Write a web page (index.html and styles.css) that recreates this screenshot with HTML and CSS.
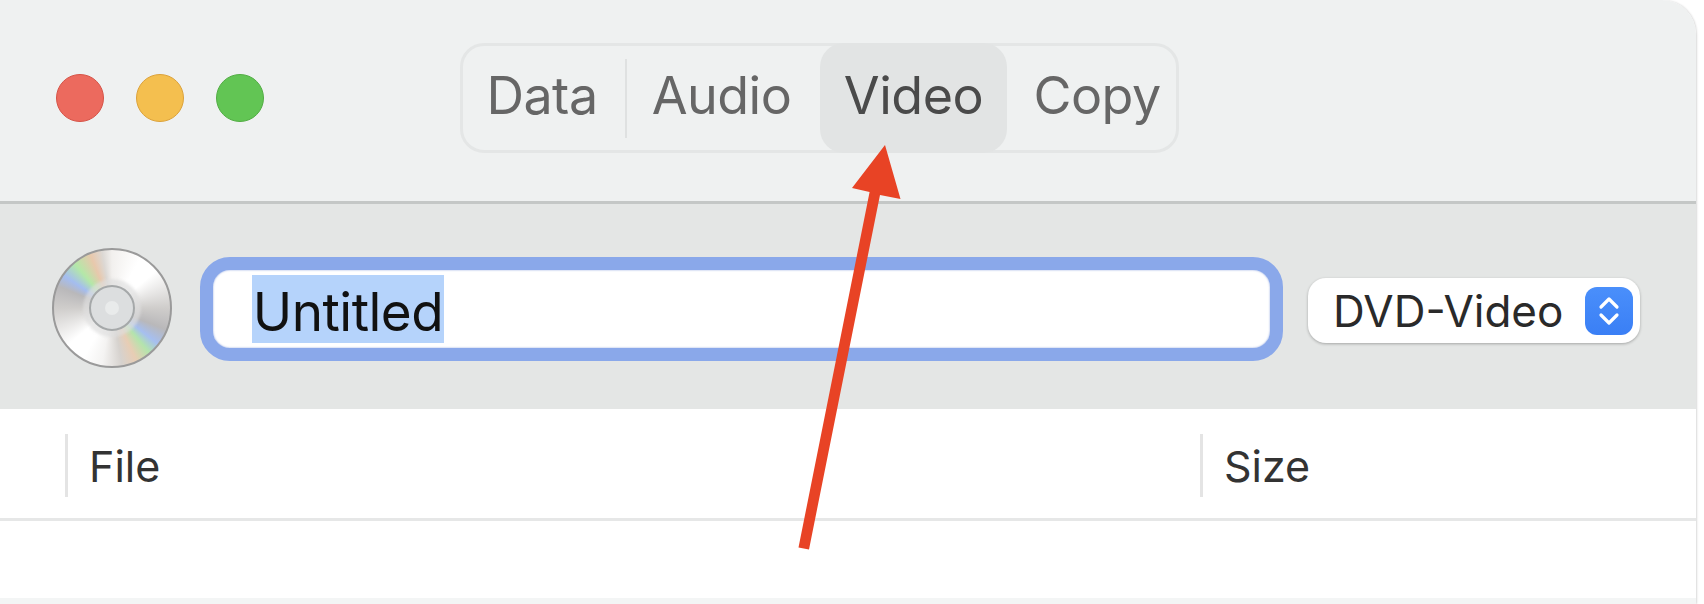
FILE: index.html
```html
<!DOCTYPE html>
<html>
<head>
    <title>Burn</title>
    <link rel="stylesheet" href="styles.css">
</head>
<body>
    <div class="window">
        <div class="titlebar">
            <div class="lights">
                <span class="light red"></span>
                <span class="light yellow"></span>
                <span class="light green"></span>
            </div>
            <div class="tabs">
                <div class="tab tab-data">Data</div>
                <div class="tab-sep"></div>
                <div class="tab tab-audio">Audio</div>
                <div class="tab tab-video active">Video</div>
                <div class="tab tab-copy">Copy</div>
            </div>
        </div>
        <div class="toolbar">
            <div class="disc">
                <div class="hub"><div class="hole"></div></div>
            </div>
            <div class="name-field"><span class="selection">Untitled</span></div>
            <div class="format-select">
                <span class="format-label">DVD-Video</span>
                <span class="stepper">
                    <svg width="30" height="36" viewBox="0 0 30 36" fill="none" stroke="#fff" stroke-width="3.2" stroke-linecap="round" stroke-linejoin="round">
                        <path d="M7 14l8-8 8 8"></path>
                        <path d="M7 22l8 8 8-8"></path>
                    </svg>
                </span>
            </div>
        </div>
        <div class="table-head">
            <div class="col col-file">File</div>
            <div class="col col-size">Size</div>
        </div>
        <div class="table-body"></div>
    </div>
    <svg class="arrow" width="1704" height="604" viewBox="0 0 1704 604">
        <path d="M885 145L900.500 199L880 195L809 549.500L798.500 547.500L869.600 192L852 188Z" fill="#e84325"></path>
    </svg>
</body>
</html>
```

FILE: styles.css
```css
body {
    font-family: Inter, "Liberation Sans", sans-serif;
    margin: 0;
    width: 1704px;
    height: 604px;
    overflow: hidden;
    position: relative;
    background-color: #fff;
}
.window {
    width: 1696px;
    height: 604px;
    display: flex;
    flex-direction: column;
    border-top-right-radius: 34px;
    overflow: hidden;
    box-shadow: 1px 0 2px rgba(0, 0, 0, 0.15);
}
.titlebar {
    height: 201px;
    flex-shrink: 0;
    background-color: #eff1f1;
    border-bottom: 3px solid #c4c7c6;
    display: flex;
    align-items: flex-start;
}
.lights {
    display: flex;
    gap: 32px;
    margin: 74px 0 0 56px;
}
.light {
    width: 48px;
    height: 48px;
    border-radius: 50%;
    box-sizing: border-box;
    border: 1px solid transparent;
}
.red {
    background-color: #ec6a5e;
    border-color: #d65347;
}
.yellow {
    background-color: #f4bf4f;
    border-color: #dca23a;
}
.green {
    background-color: #62c554;
    border-color: #52ad44;
}
.tabs {
    display: flex;
    align-items: center;
    box-sizing: border-box;
    width: 719px;
    height: 110px;
    margin: 43px 0 0 196px;
    border: 3px solid #e4e6e6;
    border-radius: 24px;
}
.tab {
    font-size: 52px;
    height: 104px;
    line-height: 100px;
    color: #666;
    letter-spacing: -0.5px;
    text-align: center;
    box-sizing: border-box;
}
.tab-data {
    width: 162px;
    padding-right: 4px;
}
.tab-sep {
    width: 2px;
    height: 79px;
    background-color: #dfe1e1;
}
.tab-audio {
    width: 193px;
    padding-right: 4px;
}
.tab-video {
    width: 187px;
    height: 110px;
    line-height: 106px;
    margin: -3px 0;
    color: #4a4a4a;
    background-color: #e2e4e4;
    border-radius: 24px;
}
.tab-copy {
    flex: 1;
    padding-left: 11px;
}
.toolbar {
    height: 205px;
    flex-shrink: 0;
    background-color: #e4e6e5;
    display: flex;
    align-items: center;
}
.disc {
    width: 120px;
    height: 120px;
    margin: 2px 0 0 52px;
    flex-shrink: 0;
    box-sizing: border-box;
    border-radius: 50%;
    border: 2px solid #9a9a9a;
    display: flex;
    align-items: center;
    justify-content: center;
    background: conic-gradient(from 0deg, #f2f0ee 0deg, #ffffff 30deg, #ffffff 50deg, #cfcdcb 90deg, #b9b8ba 112deg, #a6bff0 128deg, #b4e4ac 140deg, #e8cdb4 155deg, #d6d2ce 170deg, #f4f3f2 190deg, #ffffff 210deg, #ffffff 230deg, #cfcdcb 270deg, #b9b8ba 292deg, #a4bdf0 304deg, #b4e8a8 320deg, #e8c8ac 338deg, #dcd8d4 350deg, #f2f0ee 360deg);
}
.hub {
    width: 42px;
    height: 42px;
    border-radius: 50%;
    border: 2px solid #a5a8a9;
    background-color: #dcdedf;
    box-shadow: 0 0 3px 6px rgba(222, 222, 222, 0.7);
    display: flex;
    align-items: center;
    justify-content: center;
}
.hole {
    width: 14px;
    height: 14px;
    border-radius: 50%;
    background-color: #e9ebeb;
}
.name-field {
    box-sizing: border-box;
    width: 1083px;
    height: 104px;
    margin: 5px 0 0 28px;
    padding-left: 39px;
    display: flex;
    align-items: center;
    flex-shrink: 0;
    background-color: #fff;
    border: 13px solid #8aa8ea;
    border-radius: 30px;
    box-shadow: inset 0 0 2px rgba(60, 100, 200, 0.6);
}
.selection {
    background-color: #b5d3fb;
    color: #111;
    font-size: 53px;
    height: 68px;
    line-height: 74px;
    width: 192px;
    text-align: center;
    letter-spacing: -0.5px;
}
.format-select {
    box-sizing: border-box;
    width: 332px;
    height: 65px;
    margin: 8px 0 0 25px;
    padding: 0 7px 0 25px;
    display: flex;
    align-items: center;
    justify-content: space-between;
    background-color: #fff;
    border-radius: 18px;
    box-shadow: 0 1px 3px rgba(0, 0, 0, 0.28);
}
.format-label {
    font-size: 44px;
    color: #2a2a2a;
}
.stepper {
    width: 48px;
    height: 48px;
    border-radius: 12px;
    background: linear-gradient(#4a8ffb, #3a7ff5);
    display: flex;
    align-items: center;
    justify-content: center;
}
.table-head {
    height: 112px;
    flex-shrink: 0;
    box-sizing: border-box;
    background-color: #fff;
    border-bottom: 3px solid #e6e7e7;
    display: flex;
    align-items: center;
    padding-left: 65px;
}
.col {
    box-sizing: border-box;
    height: 63px;
    line-height: 65px;
    border-left: 3px solid #e4e4e4;
    font-size: 43px;
    color: #333;
    margin-top: 4px;
    padding-left: 21px;
}
.col-file {
    width: 1135px;
}
.col-size {
    flex: 1;
}
.table-body {
    flex: 1;
    background-color: #fff;
    border-bottom: 6px solid #f3f5f5;
}
.arrow {
    position: absolute;
    top: 0;
    left: 0;
}
```
